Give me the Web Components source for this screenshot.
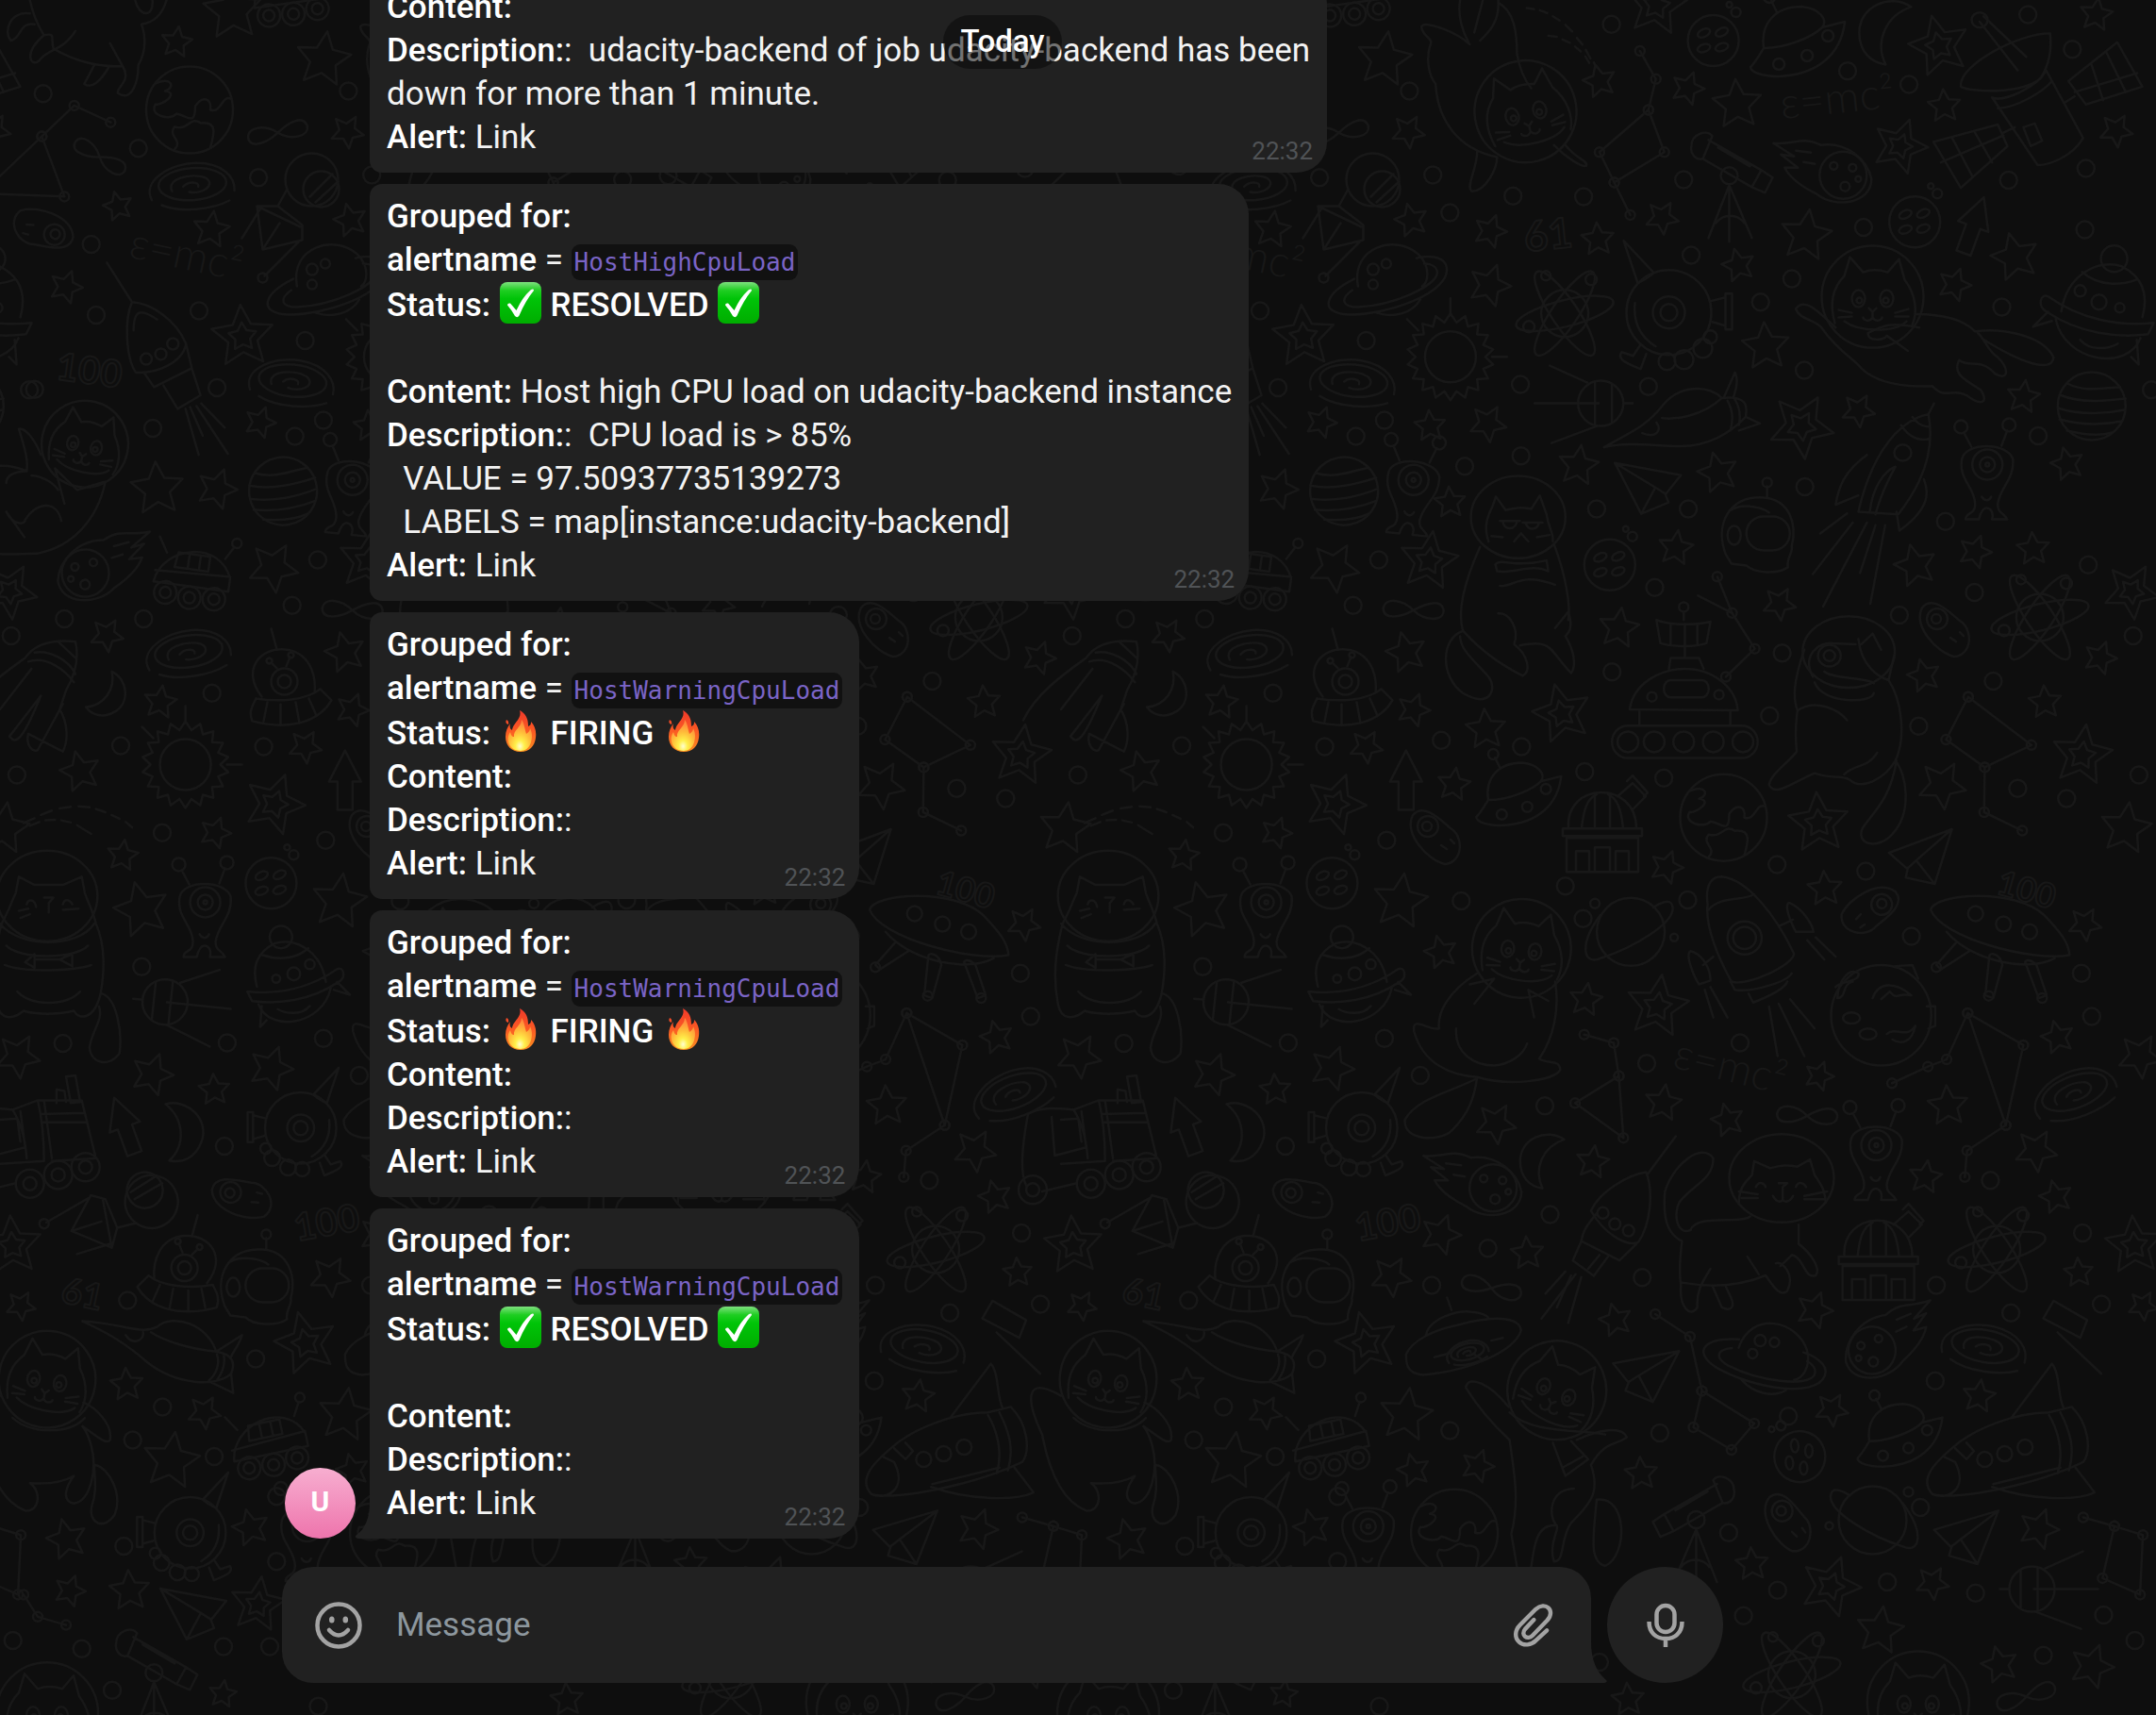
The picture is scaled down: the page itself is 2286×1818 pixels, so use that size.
<!DOCTYPE html>
<html lang="en">
<head>
<meta charset="utf-8">
<meta name="viewport" content="width=device-width, initial-scale=1">
<title>Chat</title>
<style>
  html, body { margin: 0; height: 100%; background: #0e0e0e; overflow: hidden; }
  body { font-family: Roboto, "Liberation Sans", sans-serif; font-size: 35px; line-height: 46px; color: #f3f3f3; }
  b { font-weight: 500; color: #fff; }
  a { color: inherit; text-decoration: none; }
</style>
</head>
<body>
<chat-app>
  <date-pill slot="date">Today</date-pill>
  <message-row><message-bubble time="22:32"><b>Content:</b><br><b>Description:</b>:&nbsp; udacity-backend of job udacity-backend has been<br>down for more than 1 minute.<br><b>Alert:</b> <a href="#">Link</a></message-bubble></message-row>
  <message-row><message-bubble time="22:32"><b>Grouped for:</b><br><b>alertname</b> = <code-tag>HostHighCpuLoad</code-tag><br><b>Status: <emoji-icon name="check"></emoji-icon> RESOLVED <emoji-icon name="check"></emoji-icon></b><br><br><b>Content:</b> Host high CPU load on udacity-backend instance<br><b>Description:</b>:&nbsp; CPU load is &gt; 85%<br>&nbsp; VALUE = 97.50937735139273<br>&nbsp; LABELS = map[instance:udacity-backend]<br><b>Alert:</b> <a href="#">Link</a></message-bubble></message-row>
  <message-row><message-bubble time="22:32"><b>Grouped for:</b><br><b>alertname</b> = <code-tag>HostWarningCpuLoad</code-tag><br><b>Status: <emoji-icon name="fire"></emoji-icon> FIRING <emoji-icon name="fire"></emoji-icon></b><br><b>Content:</b><br><b>Description:</b>:<br><b>Alert:</b> <a href="#">Link</a></message-bubble></message-row>
  <message-row><message-bubble time="22:32"><b>Grouped for:</b><br><b>alertname</b> = <code-tag>HostWarningCpuLoad</code-tag><br><b>Status: <emoji-icon name="fire"></emoji-icon> FIRING <emoji-icon name="fire"></emoji-icon></b><br><b>Content:</b><br><b>Description:</b>:<br><b>Alert:</b> <a href="#">Link</a></message-bubble></message-row>
  <message-row avatar="U"><message-bubble last time="22:32"><b>Grouped for:</b><br><b>alertname</b> = <code-tag>HostWarningCpuLoad</code-tag><br><b>Status: <emoji-icon name="check"></emoji-icon> RESOLVED <emoji-icon name="check"></emoji-icon></b><br><br><b>Content:</b><br><b>Description:</b>:<br><b>Alert:</b> <a href="#">Link</a></message-bubble></message-row>
  <message-composer slot="composer"></message-composer>
</chat-app>

<script>
const define = (name, html, setup) => customElements.define(name, class extends HTMLElement {
  constructor() {
    super();
    this.attachShadow({ mode: 'open' });
  }
  connectedCallback() {
    this.shadowRoot.innerHTML = typeof html === 'function' ? html(this) : html;
    if (setup) setup(this);
  }
});

/* ---------- space doodle wallpaper ---------- */
/* Each sheet is [x, y, scaleX, scaleY]: where its drawing grid sits on the tile. */
const SHEETS = { A: [1340, 0, .6033, .574], B: [1340, 900, .6033, .5855], C: [1125, 0, .3333, .574], D: [1125, 900, .3333, .5855] };
const at = (s, x, y) => { const k = SHEETS[s]; return [k[0] + x * k[2], k[1] + y * k[3]].map(n => n.toFixed(1)); };
const path = (s, d) => { const k = SHEETS[s]; return `<path transform="translate(${k[0]} ${k[1]}) scale(${k[2]} ${k[3]})" d="${d}"/>`; };
const oval = (s, x, y, rx, ry) => { const k = SHEETS[s], p = at(s, x, y); return `<ellipse cx="${p[0]}" cy="${p[1]}" rx="${rx * k[2]}" ry="${(ry || rx) * k[3]}"/>`; };
const dots = (s, list, r) => list.trim().split(/\s+/).map(q => { const [x, y] = q.split(',').map(Number), p = at(s, x, y); return `<circle cx="${p[0]}" cy="${p[1]}" r="${r || 9}"/>`; }).join('');
const burst = (n, ro, ri) => { let d = ''; for (let i = 0; i < n * 2; i++) { const a = Math.PI * i / n - Math.PI / 2, r = i % 2 ? ri : ro; d += (i ? 'L' : 'M') + (r * Math.cos(a)).toFixed(1) + ' ' + (r * Math.sin(a)).toFixed(1); } return d + 'Z'; };
const stars = (s, list, twin) => list.trim().split(/\s+/).map((q, i) => {
  const [x, y, r] = q.split(',').map(Number), p = at(s, x, y), t = [8, -14, 20, -4, 30][i % 5];
  return `<path transform="translate(${p[0]} ${p[1]}) rotate(${t})" d="${burst(5, r, r * .48)}${twin ? burst(5, r * .45, r * .24) : ''}"/>`;
}).join('');
const chain = (s, list) => path(s, 'M' + list.trim().split(/\s+/).join('L')) + dots(s, list, 5);
const c = (x, y, r) => `<circle cx="${x}" cy="${y}" r="${r}"/>`;
const e = (x, y, rx, ry, t) => `<ellipse cx="${x}" cy="${y}" rx="${rx}" ry="${ry}" transform="rotate(${t || 0} ${x} ${y})"/>`;
const p = d => `<path d="${d}"/>`;
const ART = {
  infinity: p('M0 0C-12-12-30-14-32-2C-32 10-14 8 0 0C14-8 30-12 32 0C32 12 12 12 0 0Z'),
  moon: p('M27-27C5-42-28-28-28 0C-28 20-16 32 0 34C-12 10 0-18 27-27Z'),
  face: c(0, 0, 27) + e(-10, -8, 7, 4, -25) + e(9, -9, 7, 4, -25) + e(-10, 8, 7, 4, -20) + e(9, 7, 7, 4, -20) + c(17, -38, 3) + c(24, -30, 5),
  comet: p('M-54-32C-32-30-24-40-4-30C24-34 46-14 50 6C50 32 12 38-8 22C-20 16-36 6-42-6L-28-6L-46-20L-32-18ZM-30-24L-14-22M-22-12L-10-10') + c(20, 2, 25) + c(10, -8, 4) + c(30, -6, 4) + c(22, 14, 5) + c(36, 6, 3),
  telescope: p('M-40-34C-40-46-24-52-18-44L-28-20C-36-18-42-26-40-34M-22-40L34-8L24 10L-28-20M34-8L46 0L38 16L24 10M-12-32L22-12M0 8L-22 64M0 8V68M0 8L24 64M-14 48C-6 38 8 38 16 48') + c(0, -2, 9),
  galaxy: e(0, 0, 36, 17, 0) + p('M-44 14C-54-8-20-24 6-22C34-20 46-4 44 10M-22 6C-28-8 0-12 14-6C26 2 10 12-4 8M-10 2C-4-4 8-2 6 3M-34 20C-14 30 20 28 38 20'),
  striped: c(0, 0, 36) + p('M-26-24C-6-14 14-20 30-20M-34-12C-10-2 20-6 36-8M-36 2C-12 10 16 8 35 4M-34 14C-12 20 12 20 32 16M-26 26C-10 30 8 32 22 28'),
  alien: p('M-26-14C-22-32 22-32 28-14C30 8 14 16 12 34C12 44 18 42 22 50H6C8 42 4 38 0 38C-4 38-6 42-8 50H-22C-22 42-12 46-12 34C-12 16-30 8-26-14M-16-27L-24-42M16-28L22-44M-5 26C-2 31 3 31 5 26') + c(1, -8, 16) + c(1, -8, 8) + c(1, -8, 2) + c(-27, -48, 7) + c(24, -50, 7),
  atom: c(0, 0, 25) + e(0, 0, 53, 14, -14) + e(0, 0, 53, 14, 56) + e(0, 0, 53, 14, 124) + c(-38, 14, 6) + c(28, -36, 6) + c(-20, -40, 5),
  orb: c(0, 0, 45) + c(0, 0, 17) + c(0, 0, 9) + p('M-33-31L-48-76L-16-42C-22-36-28-34-33-31M44-12L60-16V14L46 10M60-20H67V18H60ZM-30 34L-38 46L-50 42C-56 50-44 54-30 60L-24 44M-36-10C-38 10-30 26-14 36') + c(-2, 52, 9) + c(16, 50, 10) + c(36, 38, 10) + c(44, 26, 7),
  saturn: p('M-34 8C-42-34 6-48 30-26C44-12 40 4 34 8M-38 0C-70 16-76 36-44 38C0 38 64 14 60-12C58-26 36-24 28-22M-40 12C-54 22-50 30-34 30C4 28 48 8 50-6C50-14 42-16 36-16M-14 36C4 42 24 36 32 22') + c(-18, -10, 6) + c(-4, -16, 5) + c(-18, 6, 5),
  ringed: c(0, 0, 36) + p('M-32-18C-56 14-50 36-32 28C0 18 50-10 44-28C42-36 30-30 24-26') + c(-38, -30, 5) + c(46, 6, 4),
  saucer: p('M-34 8C-38-18-22-36 6-36C26-34 34-22 28-14M-34 8C-10 8 18-4 28-14L52-20C48 14 24 36-18 38C-34 38-48 34-48 28C-42 22-38 14-34 8M-20-30L-26-42') + c(-18, 25, 6) + c(12, 16, 6) + c(34, -5, 6) + c(-28, -46, 6),
  guy: p('M-28 18C-50-10-30-34-4-32C22-30 30-6 28 14M-34 20C-10 24 20 22 34 10L46 22C32 46 0 54-38 44C-42 34-38 28-34 20M-22 24L-26 44M-8 26V48M8 24L12 46M22 20L30 38M-12-32L-18-54M-2-14L2-24M-12-12L-18-18') + c(-4, 2, 14) + c(-4, 2, 7) + c(3, -26, 3) + c(-20, -20, 3),
  potato: p('M-26-20C-36 0-10 28 8 32C28 30 28 2 14-6C4-14-14-34-26-20M4 12L10 16M14 6L18 10') + c(-10, -8, 11) + c(-11, -8, 5),
  plane: p('M-35-27L35-14L19 6L8-1L-35-27L-7 27L8-1M-7 27L22 15L18 5'),
  helmet: p('M-34 22C-46-10-30-40 6-38C34-36 42-10 36 14C38 20 30 26 32 36C20 44-4 42-12 34L-28 32L-34 22M10-38V-50M-30-24C-14-34 8-26 12-22') + `<rect x="-12" y="-18" width="46" height="36" rx="18"/>` + e(-25, 2, 7, 10) + c(10, -54, 5),
  observatory: p('M-38 46V10H38V46ZM-42 0H42V8H-42ZM-36 0C-40-50 36-52 36 0M-22 0C-20-20-16-32-6-36M22 0C20-20 16-32 6-36M-8 0V-36M8 0V-36M16-34L32-48L46-34L32-20M26-50L32-56L48-38L44-34M-28 46V24H-14V46M-8 46V20H8V46M14 46V24H28V46'),
  earth: c(0, 0, 46) + p('M-36-28C-20-36-14-24-26-20C-10-18-30-4-36-6C-44 6-20 12-14 4C-2 6 6 18 6-4C14-16 24-12 22 0C34 4 34-16 44-12M-16 42C-6 32-24 28-16 18C0 22 0 6 12 14C30 12 26 26 22 40'),
  arrow: p('M0-31L17 2H8V32H-8V2H-17Z'),
  capsule: c(16, -50, 14) + p('M-40 6C-34-34 0-50 24-42C48-30 52-10 46 12M-54-10C-62-14-66 0-56 6C-20 30 20 34 52 30L58 18C20 22-20 14-54-10M-46 14C-36 60 30 70 44 34M-54 6L-70 22L-50 16M34 54L42 62L40 36M-20 36C-10 48 10 46 20 40M-18-36C0-20 24-22 40-28') + c(-20, -16, 6) + c(0, -4, 8) + c(22, 2, 5),
  rover: p('M-44 14C-40-24 20-40 36 0V14ZM-44 2L36-2M-22-20H12V-4H-24ZM-10-20V-4M2-20V-4M28-20L36-34M-34-18L-44-34') + c(-30, 24, 12) + c(-30, 24, 6) + c(-4, 26, 12) + c(-4, 26, 6) + c(22, 24, 12) + c(22, 24, 6) + c(38, -38, 5),
  sputnik: c(0, 0, 24) + p('M-70 0H-2M-54-40L-14-22M-52 42L-4 24M24 0H34M-6-23V23M12-20V20'),
  probe: c(28, -38, 28) + c(38, -28, 19) + p('M26-20L50-44M32-14L56-36M2-28L-8-10L18 10L18 26L-24 36L-30-10L-8-10M-30-10L16 12M-26-8L-46 24M14 28L-22 64M-24 36L-6 8') + c(-24, 66, 5),
  sun: c(0, 0, 27) + p(burst(18, 46, 37)) + p('M0-44V-62M44 0H60M-34-28L-46-40'),
  cat: c(0, 0, 54) + p('M-40 28C-48 0-38-14-30-22L-24-42L-10-26C0-30 10-28 16-26L28-40L34-18C46-2 48 16 42 30M-30 26C-14 38 24 38 36 26M-4 12L0 16L4 12M0 16V22C-4 28-10 24-10 22M0 22C4 28 10 24 10 22M-36 14L-22 17M-36 22L-22 21M24 17L38 13M24 21L38 21') + e(-15, 2, 7, 9) + e(15, 2, 7, 9) + c(-14, 4, 3) + c(14, 4, 3)
};
const put = (s, name, x, y, t = 0, sx = 1, sy = Math.abs(sx)) => { const q = at(s, x, y); return `<g transform="translate(${q[0]} ${q[1]}) rotate(${t}) scale(${sx} ${sy})">${ART[name]}</g>`; };
const word = (s, x, y, t, text, size, open) => { const q = at(s, x, y); return `<text transform="translate(${q[0]} ${q[1]}) rotate(${t})" font-size="${size}" class="${open ? 'open' : 'thin'}">${text}</text>`; };

const tile = () => [
  dots('A', '611,45 256,168 297,323 327,393 438,362 562,363 738,332 98,328 751,471 873,558 928,515 1054,420 1134,156 1026,131 1343,27 1421,91 1445,311 1309,333 1443,424 1297,567 950,684 676,714 451,710 180,629 25,716 212,776 162,806 353,861 452,842 585,940 746,940 951,899 1361,805 1198,963 687,1085 202,1034 157,1118 612,1241 889,1322 911,1206 1117,1136 1249,1094 1449,1043 1528,1174 1282,1258 1151,1341 312,1367 107,1379 453,1379 564,1425 703,1437 1325,1456 1411,1475 1538,1431 216,1552 16,1280 1560,720'),
  dots('B', '43,351 212,343 275,410 494,465 38,538 503,662 394,723 295,790 93,923 327,1053 20,1100 530,67 561,126 745,92 902,28 1058,40 1138,158 837,351 673,388 665,776 696,1057 922,1027 1277,600 1182,790 1180,963 1313,840 1439,695 1472,824 1455,303 1437,225 347,94 817,1238 843,1388 903,1342 1096,1327 1251,1347 1476,1387 1370,1460 1531,1433 1154,1192 203,1552 590,1472'),
  dots('C', '137,173 440,274 290,451 306,582 110,719 633,574 486,791 205,1143 457,1143 384,1377 516,1538'),
  dots('D', '451,213 200,352 406,817 517,1010 422,1070 394,1262 260,1448 357,1523 711,1444 880,1172 880,1290 858,1444'),
  stars('A', '212,110,30 590,150,18 745,163,18 832,193,27 254,243,18 15,424,20 259,407,18 398,427,18 587,442,18 700,402,18 953,435,28 834,490,18 397,527,23 1196,196,18 1498,241,18 1463,27,18 1320,475,26 1214,526,18 882,640,26 1045,758,18 1335,733,18 1412,857,18 101,780,17 292,787,17 394,782,20 553,860,22 798,873,22 25,903,22 327,928,17 124,1048,27 724,1012,19 1145,1045,23 1250,1019,18 1352,1014,18 906,1115,18 624,1160,22 250,1205,22 263,1311,18 390,1347,22 180,1379,18 334,1449,18 1160,1248,18 1470,1215,18 1373,1297,18 1192,1450,26 1515,1530,28'),
  stars('B', '240,95,30 311,187,18 708,33,18 986,72,19 1443,136,18 566,273,18 1395,341,18 120,397,24 20,436,17 408,497,22 702,460,20 815,491,18 976,411,16 1202,465,22 1357,546,23 1163,594,18 1392,630,18 311,698,22 463,732,18 224,774,22 578,567,18 618,853,18 968,835,20 1432,767,16 1545,827,16 250,1025,29 263,1125,18 376,1117,18 663,1131,18 998,1015,18 1257,991,18 84,1229,20 1362,1231,22 858,1295,18 1175,1329,18 1083,1415,26 1293,1477,20 1455,1480,24 640,1540,18 1540,375,24 35,1530,15'),
  stars('C', '562,78,17 375,381,16 210,530,18 500,903,29 340,1173,18 510,1297,18 255,1425,22 685,1538,17 740,20,32'),
  stars('D', '390,12,17 450,110,30 484,408,23 403,970,18 650,1020,18 545,1108,31 212,1250,22 222,1343,17 412,1343,22'),
  stars('A', '690,10,33 1187,85,33 1118,270,30 70,622,34 945,787,35 290,1036,32 524,1318,32 126,1485,33 975,1520,33 1525,1092,30 1438,1395,33', 1),
  stars('B', '692,285,34 181,895,34 996,1335,33 1530,718,32', 1),
  stars('D', '820,1368,30', 1),
  chain('A', '661,94 689,146 676,203 590,281 616,337 704,281 676,203'), chain('A', '616,337 644,397'),
  chain('A', '797,1065 823,1132 863,1198 812,1250'), path('A', 'M763 1100L823 1132'),
  chain('A', '1238,1287 1199,1366 1267,1417 1349,1376 1238,1287'), chain('A', '1267,1417 1266,1500 1333,1534'),
  chain('C', '-58,357 133,252 205,363 -58,357'), chain('C', '133,252 236,195 352,226'),
  chain('B', '563,336 615,351 624,411 547,460 632,523 624,411'),
  chain('B', '688,842 749,883 770,981 755,1047 822,1088 862,1040 770,981'),
  chain('B', '1104,424 1167,394 1200,381 1237,297 1335,355 1304,500 1237,297'), chain('B', '1304,500 1236,546 1232,594'),
  chain('B', '1440,1210 1495,1226 1545,1242 1540,1350 1474,1320 1495,1226'), chain('D', '75,1350 120,1390 210,1405'),

  put('A', 'cat', 460, 206, -14),
  path('A', 'M362 82C340 60 280 35 277 50C280 70 300 70 292 85C285 110 290 140 302 155C305 220 340 275 410 290M345 0C340 30 350 60 360 78M385 0L370 60M412 0C415 40 395 60 380 75M412 5C440 20 445 60 445 100C450 130 460 150 470 163M375 280C375 310 355 345 365 353C390 355 410 310 410 290M510 268C530 290 560 310 567 306C570 296 550 295 530 268'),
  path('A', 'M462 15L475 17M485 19L498 24M508 30L520 38M530 46L542 58M550 70L560 82M566 92L574 108M580 115L584 124M500 66L515 68M525 73L538 79M547 86L557 95M565 104L572 116'),
  put('A', 'face', 790, 75), put('A', 'face', 608, 1043), put('A', 'face', 1144, 410), put('B', 'face', 120, 62), put('B', 'face', 942, 1100, -70),
  put('A', 'saucer', 935, 75, 0), put('A', 'saucer', 445, 1465, 0, .9), put('B', 'saucer', 1115, 1060, 0, .9),
  put('A', 'moon', 1093, 60), put('B', 'moon', 490, 565, 0, .85), put('C', 'moon', 335, 1285, 60, -.7), put('D', 'moon', 570, 515, 20, -.9),
  word('A', 910, 220, -6, 'ε=mc²', 46), word('B', 716, 395, 14, 'ε=mc²', 46), word('C', 405, 475, 12, 'ε=mc²', 46),
  word('C', 175, 700, 8, '100', 40, 1), word('B', 165, 710, -10, '100', 40, 1), word('B', 1285, 80, 16, '100', 36, 1), word('A', 460, 465, -6, '61', 44, 1), word('D', 190, 820, 12, '61', 38, 1),
  path('A', 'M1258 40L1325 130M1265 30L1340 105M1225 160C1220 120 1330 60 1382 62C1385 90 1380 120 1365 145C1330 175 1240 170 1225 160M1280 180C1300 190 1360 160 1375 130L1440 255C1420 290 1380 305 1360 305ZM1335 235L1355 228L1368 260L1348 270ZM1414 150L1500 78L1544 160L1445 193ZM1425 170L1535 135M1455 120L1475 185M1480 95L1515 170M1177 262L1290 230L1307 270L1225 347ZM1190 300L1300 250M1210 255L1245 325M1250 245L1280 300M1290 200C1320 200 1370 170 1385 150M1407 190L1425 178M1300 245L1320 235'), oval('A', 1258, 37, 14),
  put('A', 'telescope', 818, 328), put('B', 'telescope', 760, 1218, 0, -1), put('D', 'telescope', 490, 1495),
  put('A', 'comet', 985, 320), put('B', 'comet', 370, 610), put('B', 'comet', 1100, 895, -16, -1), put('C', 'comet', 330, 1050, -8, -1),
  put('A', 'probe', 145, 398), put('D', 'probe', 350, 668, 105, -1),
  put('A', 'saturn', 222, 515), put('B', 'saturn', 890, 920, 30),
  put('A', 'sun', 328, 659),
  put('A', 'atom', 529, 579), put('A', 'atom', 1364, 1140), put('B', 'atom', 1288, 725), put('B', 'atom', 928, 1495),
  put('A', 'orb', 712, 577), put('B', 'orb', 172, 505, 0, -.84), put('D', 'orb', 605, 1238, 0, -.84),
  put('A', 'sputnik', 592, 745), put('B', 'sputnik', 1350, 1340, 0, -1), put('D', 'sputnik', 525, 277, 6, -1),
  path('A', 'M598 826C640 800 670 790 700 750C730 710 780 710 805 735C850 730 850 750 847 770C820 800 780 825 730 824C690 824 640 815 598 826M700 772C720 775 770 770 805 735M665 800C690 810 700 795 690 780M808 735L828 688C835 700 830 720 825 735M847 770L872 782L835 795M815 740C825 760 825 775 820 795M828 738C838 755 838 770 835 785'),
  path('D', 'M262 855C400 860 450 880 500 865C550 840 660 860 688 910C740 915 750 930 735 950C690 975 560 970 470 930C400 895 340 875 262 855M480 875C520 890 600 905 688 910M688 910L770 880C760 900 740 910 735 920M735 950L742 985L670 965M690 915C700 930 690 950 665 962M712 918C718 935 705 950 690 962M400 880C420 900 460 890 455 875'),
  put('A', 'plane', 675, 902), put('B', 'plane', 672, 955, 0, -1), put('B', 'plane', 1238, 1250, -6, -1), put('B', 'plane', 1160, 20, -10, -1), put('D', 'plane', 615, 1385),
  put('A', 'helmet', 868, 985), put('B', 'helmet', 95, 790),
  path('A', 'M1178 745L1168 765C1120 775 1070 830 1045 945L1115 950C1160 890 1180 830 1168 765M1120 785C1135 810 1155 815 1170 810M1140 770C1150 785 1160 788 1170 788M1060 840C1020 870 1010 900 1005 932L1045 915M1160 885C1170 910 1170 940 1117 980L1112 945M1065 945C1070 900 1090 870 1110 862C1090 900 1080 930 1075 950M1025 948L978 985M1035 965L965 1060M1060 965L983 1120M1075 970L1048 1058M1092 970L1066 1115'), oval('A', 1123, 836, 15),
  put('A', 'alien', 260, 900, 6), put('A', 'alien', 1270, 872), put('B', 'alien', 1075, 550), put('B', 'alien', 182, 1240), put('D', 'alien', 650, 110),
  put('A', 'striped', 1455, 750), put('A', 'striped', 141, 907, -10),
  oval('A', 447, 955, 83, 76),
  path('A', 'M395 1000C385 970 395 950 402 935L408 917L425 942C450 935 460 938 470 940L485 915L497 950C500 975 510 985 508 1000M415 962H450M455 965H490M420 962C422 980 440 980 445 964M460 966C465 980 480 980 484 966M440 1000L452 985L465 1000M400 990L420 992M480 992L502 988M407 1042C420 1030 440 1050 497 1035L500 1055C470 1040 440 1060 410 1055ZM415 1082C440 1085 450 1055 512 1080M380 1010C350 1080 340 1130 350 1165C380 1200 420 1230 455 1248C470 1240 465 1210 440 1190C450 1160 430 1130 412 1133M510 1005C530 1060 540 1120 535 1145M512 1160L535 1130C545 1160 535 1170 530 1175C545 1200 550 1230 540 1243C500 1200 510 1180 450 1192M350 1165C310 1180 310 1250 350 1280C400 1310 410 1270 395 1250C370 1220 345 1200 345 1175'),
  put('A', 'guy', 150, 1255), put('D', 'guy', 575, 755, 0, -1),
  path('A', 'M643 1310C650 1260 700 1235 740 1235C790 1235 830 1270 833 1312ZM712 1235L715 1215H765L773 1235M740 1212V1190M690 1145L697 1188C720 1195 760 1195 778 1188L785 1148C760 1155 710 1155 690 1145M715 1152V1190M740 1152V1190M762 1152V1190M738 1145V1130M660 1312V1340M820 1312V1340M640 1340H840A28 30 0 0 1 840 1400H640A28 30 0 0 1 640 1340M715 1256H770A12 16 0 0 1 770 1288H715A12 16 0 0 1 715 1256'),
  dots('A', '640,1370 686,1370 738,1370 790,1370 842,1370', 11), dots('A', '738,1121 682,1287 800,1283', 5),
  put('A', 'arrow', 1248, 415, 20), put('A', 'arrow', 250, 1440), put('D', 'arrow', 395, 500, -20),
  put('A', 'cat', 1070, 548),
  path('A', 'M1145 580C1190 580 1230 590 1250 612C1300 605 1370 620 1388 660C1385 690 1330 670 1262 625M1062 615C1090 600 1100 595 1152 605M1062 615C1060 630 1090 630 1095 620L1132 648M1005 605C970 570 950 550 935 570C940 590 970 590 980 605C1010 650 1040 665 1050 680C1080 710 1130 715 1175 713C1200 740 1210 715 1235 730C1260 750 1275 745 1260 720C1230 700 1210 690 1222 665C1240 680 1260 660 1285 690C1310 705 1310 680 1290 660C1270 645 1270 630 1255 615'),
  put('A', 'capsule', 1468, 565), put('B', 'capsule', 160, 232, 0, -.85),
  put('A', 'galaxy', 158, 703, 6), put('B', 'galaxy', 1425, 440, -20), put('B', 'galaxy', 1268, 900, 10),
  oval('A', 1028, 1204, 81, 66), oval('A', 994, 1211, 20), oval('A', 994, 1211, 10),
  path('A', 'M965 1250C945 1210 975 1185 1000 1188L1040 1190M1045 1180C1050 1230 1080 1250 1098 1256M1050 1190L1070 1170L1085 1200M985 1240C1000 1255 1060 1250 1072 1262M968 1260C980 1300 1070 1300 1072 1280M950 1200C930 1260 930 1290 938 1312C970 1290 1010 1310 1025 1330M938 1312C930 1370 940 1390 935 1390C920 1410 890 1430 888 1450C900 1470 920 1450 968 1428C1000 1440 1010 1430 1030 1440C1050 1460 1090 1440 1110 1405C1130 1360 1120 1290 1098 1256L1108 1210M1020 1430C1040 1410 1060 1420 1078 1390M1110 1405C1130 1430 1140 1500 1105 1540C1080 1570 1040 1560 1052 1530C1070 1500 1100 1480 1112 1405'),
  put('A', 'potato', 1200, 1157), put('A', 'potato', 305, 1540), put('B', 'potato', 1070, 115, 100), put('B', 'potato', 70, 625, -30), put('B', 'potato', 925, 1215, 10), put('C', 'potato', 135, 430, 150),
  put('A', 'infinity', 263, 1127), put('A', 'infinity', 132, 245, -14), put('B', 'infinity', 955, 483), put('B', 'infinity', 400, 795, 10), put('C', 'infinity', 317, 290, 28, .95), put('B', 'infinity', 1340, 1535, -20),
  put('B', 'ringed', 645, 150), put('B', 'ringed', 1070, 1215, 0, -1),
  put('A', 'observatory', 595, 1530), put('B', 'observatory', 1080, 738),
  put('A', 'earth', 808, 1510), put('B', 'earth', 335, 1238), put('C', 'earth', 603, 203),
  put('A', 'rover', 160, -20, -8), put('B', 'rover', 122, 1070, -12),

  put('B', 'cat', 453, 180, 6, .97),
  path('B', 'M375 225C320 260 305 300 308 325C290 330 260 300 264 330C280 390 330 410 375 413C430 430 510 420 521 400C520 380 500 390 484 380C510 340 520 290 512 240M375 415C330 440 270 450 248 490C245 530 310 530 330 510C360 480 370 450 375 413M338 325C335 370 370 392 405 392C430 390 455 375 463 352M362 245L405 235L370 280M465 255L500 275M465 255L475 305'),
  path('B', 'M780 100C775 60 790 50 805 50C850 55 900 120 932 190C930 210 850 250 822 240C800 200 775 140 780 100M782 110C800 85 840 95 862 82M820 240L828 255C860 260 920 240 928 225M852 262L860 278C880 270 915 255 920 240M905 140L930 128M935 150C915 110 918 95 925 98C950 110 965 140 966 150ZM790 195L772 210M750 185C740 190 755 230 765 245L785 238C785 215 770 190 750 185M888 285L903 375M905 280L950 375M925 272L968 325M775 255L790 305M785 250L815 305M955 165L985 200M970 160L1005 195'), oval('B', 845, 161, 30), oval('B', 845, 161, 20),
  oval('B', 1085, 301, 88, 91),
  path('B', 'M1110 212L1140 210L1150 235M1165 285H1180V320L1168 325M1005 250C1010 240 1050 240 1045 225C1030 215 1010 235 1008 270C1025 270 1015 245 1035 240M1070 270C1080 240 1110 240 1138 265C1110 260 1115 275 1100 258L1085 272M1095 335C1110 320 1130 345 1145 320C1140 350 1120 355 1105 345'), oval('B', 1033, 306, 15, 10), oval('B', 1062, 335, 15, 10),
  path('B', 'M1172 110C1180 80 1320 70 1372 120C1400 150 1415 170 1416 192C1350 205 1190 160 1172 110M1218 168L1182 210L1190 218L1240 185M1275 195L1268 265L1282 270L1298 210C1295 190 1275 185 1275 195M1338 205L1362 270L1376 265L1358 210C1350 200 1340 200 1338 205M1200 150C1240 200 1340 225 1390 198'), dots('B', '1251,117 1300,136 1346,150', 8), dots('B', '1182,214 1274,266 1368,270', 5),
  path('B', 'M724 520L675 588M672 585C640 590 590 620 575 655C600 700 640 720 658 712C680 680 685 620 672 585M585 660C560 690 560 700 558 710L625 745L655 715M558 710L543 745L580 773L605 738M570 760L590 735M548 770L488 850M540 772L515 830M558 775L535 858M530 765L495 805'), dots('B', '596,659 617,679 641,691', 6),
  oval('B', 910, 596, 92, 80),
  path('B', 'M835 640C835 610 850 600 858 590L862 565L890 578C910 572 920 572 938 575L960 562L968 590C985 615 985 620 988 640M865 612C870 600 880 605 882 612M935 612C940 600 950 605 953 612M905 605H920L912 612V635M895 628C900 640 910 640 912 635C915 640 925 640 930 628M835 620L868 625M840 632L868 632M950 628L990 620M950 634L985 634M855 665C840 680 760 660 750 690C725 700 720 660 730 640C750 610 790 600 790 560C770 530 720 570 705 620C700 680 715 700 735 710C730 750 730 770 733 790C730 830 750 850 762 830C760 800 770 785 785 760M735 785C790 795 840 790 882 772C900 800 910 810 920 800C935 770 910 745 900 750M940 680V715C960 730 980 760 970 772C950 780 950 740 928 735L908 755M850 738L870 770M788 790L805 830C820 838 830 830 820 810L812 792'),
  path('B', 'M250 915C260 890 300 870 340 862C400 845 450 845 452 872C440 910 360 945 280 952C250 950 250 930 250 915M285 880C290 850 340 835 365 838C390 840 400 850 392 852M322 812L330 835M300 920L330 912M400 890L420 885M385 925L370 915'), put('B', 'galaxy', 358, 910, -14, .5),
  put('B', 'cat', 515, 980, 24, .97),
  path('B', 'M430 1010C400 970 360 950 355 975C370 1000 390 1030 432 1070C440 1130 450 1180 435 1240L445 1300M432 1020C470 1060 560 1050 600 1060M550 1070C590 1050 630 1045 638 1065C620 1080 600 1070 575 1115C590 1160 580 1180 540 1220C520 1250 530 1290 510 1290C500 1260 520 1230 515 1225C480 1220 475 1260 470 1300M545 1158C500 1160 500 1210 515 1225M585 1178C640 1170 640 1280 600 1298C570 1290 580 1240 585 1178M508 1075L530 1135L570 1105L540 1072M525 1120L560 1100'),
  path('B', 'M1175 1168C1150 1140 1180 1110 1215 1080C1250 1050 1320 1020 1380 1020L1420 1010C1450 1040 1455 1090 1440 1110C1360 1150 1220 1180 1175 1168M1315 1028L1385 932C1400 950 1395 990 1405 1010M1280 1155C1350 1180 1430 1180 1460 1165L1425 1118M1175 1168C1200 1180 1240 1160 1215 1110L1195 1100M1215 1085L1235 1105L1248 1090L1235 1075M1380 1025C1400 1060 1405 1100 1395 1130M1400 1020C1420 1060 1425 1090 1415 1125M1282 1150L1400 1120'), dots('B', '1267,1105 1302,1095 1338,1083', 8),
  put('B', 'cat', 1150, 1545),
  path('B', 'M1370 850L1388 818L1447 853L1435 885ZM1395 875L1472 950'),

  oval('D', 150, 85, 160, 82),
  path('D', 'M5 135C30 110 40 90 50 80L60 50L110 65H200L260 50L270 80C290 110 300 120 305 135M0 135C60 180 250 180 300 135M85 100C90 90 110 90 115 105M200 100C205 90 220 90 230 100M140 88H170L155 98V115M60 112L90 108M65 125L95 118M200 110L250 108M20 175C60 200 240 200 280 175M15 210C80 225 240 220 290 210M80 205L110 190V215ZM110 200H190M190 200L230 190V212ZM305 135C340 180 330 230 320 262C300 310 250 310 235 293C190 300 110 300 75 293C40 310 0 310-10 280C-30 220-10 170 5 135M55 258C100 285 210 285 255 258M325 262C370 270 390 330 380 370C350 395 290 390 285 360C290 330 330 310 315 285'),
  path('D', 'M-105 480C-60 465 0 470 40 472L120 455H260L305 560M-105 480C-125 540-130 590-110 610M40 472C60 490 80 520 85 560M120 455C135 490 140 520 140 565L0 570M130 480L270 478M135 495L275 495M140 455L165 560M180 460V435L205 438L210 458M210 412L240 410L255 458L225 460ZM-30 485L-20 555L80 540L65 475M0 490L55 488L65 530M165 565L300 560M-60 620L50 605'),
  dots('D', '-90,617 95,606 185,590 272,576', 15), dots('D', '-90,617 95,606 185,590 272,576', 7),
  put('D', 'cat', 150, 960, 10, .95), put('D', 'cat', 150, 1565),
  path('D', 'M0 990C-120 950-110 1000-60 1060C-40 1120 0 1180 80 1198C130 1200 130 1160 95 1148C140 1150 190 1150 235 1135C215 1150 190 1180 235 1185C290 1180 310 1120 290 1080C280 1060 270 1050 262 1045C300 1060 340 1080 350 1070C360 1040 300 1010 265 1002M300 1115C350 1120 390 1170 365 1205C330 1235 280 1220 292 1190C310 1160 300 1140 300 1115M40 1030C100 1060 220 1060 270 1030'),
  put('C', 'cat', 270, 820, 12, .85),
  path('C', 'M130 840C110 810 80 790 60 792C80 830 90 850 85 870C40 870 20 880 20 892M85 870C-30 840-170 880-220 960C-150 1030 0 1025 120 1022C230 1010 310 960 335 890M100 878C150 880 180 900 185 905M175 865L205 930M175 865L245 905L330 890M20 945C40 970 80 970 80 960C110 930 180 920 195 962M20 945L78 992'),
  path('C', 'M95 0C110 40 130 55 140 65C180 60 160 70 170 90C230 110 300 125 390 122L350 80M390 122C420 150 370 160 375 172C420 190 440 150 440 120C470 90 460 60 450 45C510 40 525 10 530 0M140 65C70 100 100 125 125 112C150 90 200 95 240 57M95 25C30 20 10 60 35 75C70 70 60 40 110 45M300 120L268 155C290 165 320 150 345 125M430 0C440 30 490 35 485 0'),
  path('C', 'M340 485L420 558C480 560 560 590 592 635C580 670 500 690 432 688C400 660 395 590 420 558M592 635L610 680L490 715L460 690M610 680L638 730L565 755L520 712M425 610C425 570 450 570 500 590M590 755L632 840M605 752L645 805M625 750L725 838M640 745L715 790'), dots('C', '465,663 512,654 550,635', 6),
  path('C', 'M-120 1330C-80 1280 20 1240 80 1215C110 1190 160 1180 240 1185C250 1210 245 1240 210 1275L190 1310C220 1340 215 1370 200 1388L90 1355C80 1380 110 1390 120 1385L200 1300M130 1285L30 1360C50 1375 70 1370 130 1285M0 1310L100 1235M90 1222C150 1210 210 1240 235 1260M110 1205C160 1200 220 1220 240 1245M185 1185L240 1215'),
  path('C', 'M75 1520L110 1511M130 1505L165 1497M190 1493L225 1490M250 1489L285 1491M305 1494L335 1500M355 1505L380 1512M400 1518L420 1528M95 1525L125 1518M145 1515L175 1514M195 1515L225 1519M245 1524L290 1540'),
  put('C', 'galaxy', 612, 340, -4), put('C', 'galaxy', 600, 1203, -8), put('C', 'rover', 625, 1060, 8), put('C', 'sun', 590, 1412)
].join('');

define('chat-wallpaper', () => `
  <style>
    :host { display: block; min-width: 0; overflow: hidden; background: #0e0e0e; }
    svg { display: block; width: 100%; height: 100%; }
    g { fill: none; stroke: #181818; stroke-width: 2.5px; stroke-linecap: round; stroke-linejoin: round; }
    path, circle, ellipse, rect { vector-effect: non-scaling-stroke; }
    text { font-family: Lato, sans-serif; font-weight: 300; }
    .thin { fill: #181818; stroke: none; }
    .open { stroke-width: 2px; font-weight: 700; }
  </style>
  <svg aria-hidden="true"><defs><g id="tile">${tile()}</g></defs><g><use href="#tile" x="-2250"/><use href="#tile" x="-1125"/><use href="#tile"/></g></svg>`);

define('chat-app', `
  <style>
    :host { display: grid; height: 100vh; grid-template: minmax(0, 1fr) / minmax(16px, 299fr) minmax(0, 1528px) minmax(16px, 459fr); overflow: hidden; }
    chat-wallpaper { grid-area: 1 / 1 / 2 / 4; }
    main { grid-area: 1 / 2; position: relative; display: flex; flex-direction: column; min-height: 0; gap: 30px; padding-bottom: 34px; }
    .log { flex: 1; min-height: 0; display: flex; flex-direction: column; justify-content: flex-end; gap: 12px; }
    .date { position: absolute; top: 16px; left: 0; right: 0; display: flex; justify-content: center; }
  </style>
  <chat-wallpaper></chat-wallpaper>
  <main>
    <div class="log"><slot></slot></div>
    <div class="date"><slot name="date"></slot></div>
    <slot name="composer"></slot>
  </main>`);

define('date-pill', `
  <style>
    :host { display: block; padding: 8px 19px 9px; border-radius: 29px; background: rgba(10, 10, 10, .55); color: #fff; font-weight: 500; font-size: 33px; line-height: 40px; }
  </style><slot></slot>`);

define('message-row', el => `
  <style>
    :host { display: flex; align-items: flex-end; padding-left: 3px; flex: none; }
    .side { flex: none; width: 75px; }
    .avatar { height: 75px; border-radius: 50%; background: linear-gradient(#f7aed0, #ee74ac); color: #fff; font-size: 30px; font-weight: 700; line-height: 71px; text-align: center; }
    .tail { flex: none; width: 15px; height: 38px; display: block; }
  </style>
  ${el.hasAttribute('avatar') ? `<div class="side avatar">${el.getAttribute('avatar')}</div>` : '<div class="side"></div>'}
  <svg class="tail" viewBox="0 0 15 38">${el.hasAttribute('avatar') ? '<path fill="#212121" d="M15 0C15 16 10 28 1 34Q-2 37 3 38H15Z"/>' : ''}</svg>
  <slot></slot>`);

define('message-bubble', el => `
  <style>
    :host { display: grid; padding: 12px 18px 14px; border-radius: 13px 32px 32px 13px; background: #212121; }
    :host([last]) { border-bottom-left-radius: 0; }
    .text, time { grid-area: 1 / 1; }
    time { place-self: end; margin: 0 -3px -6px 0; font-size: 26px; line-height: 30px; color: #505356; }
  </style>
  <div class="text"><slot></slot></div><time>${el.getAttribute('time')}</time>`);

define('code-tag', `
  <style>
    :host { display: inline; padding: 4px 3px; border-radius: 9px; background: #111; color: #7a64c6; font: 26px/26px "DejaVu Sans Mono", monospace; }
  </style><slot></slot>`);

const EMOJI = {
  check: `<defs><linearGradient id="g" x2="0" y2="1"><stop offset="0" stop-color="#7fe07f"/><stop offset=".2" stop-color="#1fce22"/><stop offset=".4" stop-color="#00c408"/><stop offset="1" stop-color="#00ad00"/></linearGradient></defs>
    <rect width="44" height="44" rx="8" fill="url(#g)"/><path fill="#fff" d="M8 24.5Q8 22 11 22.500L17.500 30Q24 16 32.500 8.500Q36 6.500 36 9Q27 20 20.500 35.500Q18.500 38.500 16 36Q12 29 8 24.500Z"/>`,
  fire: `<defs><linearGradient id="o" x2="0" y2="1"><stop offset="0" stop-color="#f0392a"/><stop offset=".5" stop-color="#fb5a23"/><stop offset="1" stop-color="#f98d20"/></linearGradient>
    <radialGradient id="i" cx=".5" cy=".85" r=".75"><stop offset="0" stop-color="#fffdd0"/><stop offset=".25" stop-color="#fff04a"/><stop offset=".6" stop-color="#ffbd3a"/><stop offset="1" stop-color="#ff8a3c"/></radialGradient></defs>
    <path fill="url(#o)" d="M21 0C28 4 30 9 30 17C33 16 33 14 33 12C37 16 39 22 38 29C37 38 31 44 22 44C12 44 6 37 6 28C6 22 8 18 11 14C10 18 11 20 13 21C14 13 24 9 21 0ZM7 10Q10 11 9 15Q5 14 7 10Z"/>
    <path fill="url(#i)" d="M23 10C26 14 26 18 28 25C31 23 32 21 32 19C35 25 34 30 33 34C31 40 27 43 22 43C15 43 10 39 9 33C8 29 9 26 11 23C12 27 13 28 15 28C14 21 23 18 23 10Z"/>`
};
define('emoji-icon', el => `
  <style>
    :host { display: inline-block; width: 44px; height: 44px; margin: 0 1px; vertical-align: -8px; line-height: 0; }
    svg { display: block; width: 44px; height: 44px; }
  </style><svg viewBox="0 0 44 44" aria-hidden="true">${EMOJI[el.getAttribute('name')]}</svg>`);

define('message-composer', `
  <style>
    :host { display: flex; align-items: flex-end; flex: none; }
    .box { flex: 1; min-width: 0; height: 123px; display: flex; align-items: center; gap: 33px; padding: 0 32px; box-sizing: border-box; background: #212121; border-radius: 33px 33px 0 33px; }
    input { flex: 1; min-width: 0; height: 60px; padding: 0; border: 0; outline: 0; background: none; color: #fff; font: inherit; }
    input::placeholder { color: #8d979e; opacity: 1; }
    button { flex: none; display: grid; place-items: center; padding: 0; border: 0; background: none; color: #a3a3a3; width: 56px; height: 56px; }
    button svg { width: 56px; height: 56px; }
    .tail { flex: none; display: block; width: 17px; height: 44px; }
    .mic { width: 123px; height: 123px; border-radius: 50%; background: #212121; }
    svg { fill: none; stroke: currentColor; stroke-width: 4.5px; stroke-linecap: round; stroke-linejoin: round; }
  </style>
  <div class="box">
    <button type="button" aria-label="Emoji"><svg viewBox="0 0 56 56"><circle cx="28" cy="28" r="22.500"/><path d="M18 33Q28 44 38 33"/><path stroke="none" fill="currentColor" d="M18 22a2.800 3.500 0 1 0 5.600 0a2.800 3.500 0 1 0-5.600 0M32.500 22a2.800 3.500 0 1 0 5.600 0a2.800 3.500 0 1 0-5.600 0"/></svg></button>
    <input type="text" placeholder="Message" aria-label="Message">
    <button type="button" aria-label="Attach"><svg viewBox="0 0 56 56"><path d="M29 21.500L19.500 31.500C14 38 22 44 27.500 38.500L43.500 22C53 11 41 1 31 10L14 27C8 33 8 41 13 45.500C18 50 26 49 31 44L43 33" transform="translate(-1 1) scale(.98)"/></svg></button>
  </div>
  <svg class="tail" viewBox="0 0 17 44"><path stroke="none" fill="#212121" d="M0 0C0 20 6 32 15 40Q19 43 14 44H0Z"/></svg>
  <button class="mic" type="button" aria-label="Record voice message"><svg viewBox="0 0 56 56"><rect x="18.500" y="7" width="19" height="28" rx="9.500"/><path stroke-linecap="butt" d="M10.500 24C10.500 36 18 42 28 42S45.500 36 45.500 24M28 42V51"/></svg></button>`);
</script>
</body>
</html>
